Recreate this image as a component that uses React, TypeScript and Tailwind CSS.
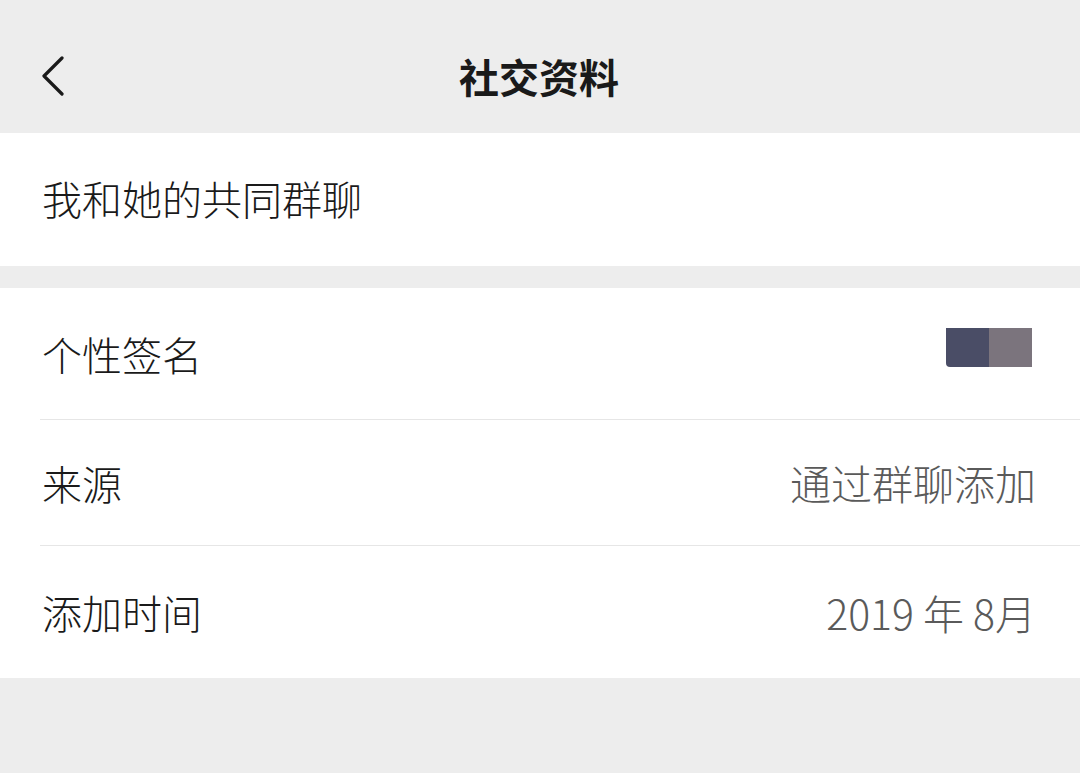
const font = { fontFamily: '"Noto Sans CJK SC", "Noto Sans", sans-serif' }

interface Row {
    label: string
    value?: string
    swatch?: boolean
}

const rows: Row[] = [
    { label: '个性签名', swatch: true },
    { label: '来源', value: '通过群聊添加' },
    { label: '添加时间', value: '2019 年 8月' },
]

export default function App() {
    return (
        <div className="w-[1080px] h-[773px] bg-[#ededed] overflow-hidden" style={font}>
            <header className="h-[133px] relative flex items-center justify-center">
                <svg className="absolute left-[40px] top-[56px]" width="26" height="40" viewBox="0 0 26 40">
                    <path d="M22 2 L4 20 L22 38" fill="none" stroke="#1a1a1a" strokeWidth="3.2" strokeLinecap="round" strokeLinejoin="round" />
                </svg>
                <h1 className="text-[40px] font-semibold text-[#1a1a1a] leading-none mt-[18px] ml-[-2px]">社交资料</h1>
            </header>

            <section className="bg-white h-[133px] flex items-center px-[42px]">
                <span className="text-[40px] leading-none text-[#1a1a1a] font-light mt-[-4px]">我和她的共同群聊</span>
            </section>

            <section className="bg-white mt-[22px] pl-[40px]">
                {rows.map((row, i) => (
                    <div
                        key={i}
                        className={
                            i === 0
                                ? 'h-[132px] flex items-center justify-between pr-[44px] border-b border-[#e6e6e6]'
                                : i === 1
                                  ? 'h-[126px] flex items-center justify-between pr-[44px] border-b border-[#e6e6e6]'
                                  : 'h-[132px] flex items-center justify-between pr-[44px]'
                        }
                    >
                        <span className="text-[40px] leading-none text-[#1a1a1a] font-light ml-[2px]">{row.label}</span>
                        {row.swatch ? (
                            <div className="flex w-[86px] h-[39px] mt-[-12px] mr-[4px]">
                                <div className="w-[43px] h-full bg-[#4a4d66] rounded-bl-[4px]" />
                                <div className="w-[43px] h-full bg-[#7b747d]" />
                            </div>
                        ) : (
                            <span className="text-[41px] leading-none text-[#5a5a5a] font-light">{row.value}</span>
                        )}
                    </div>
                ))}
            </section>
        </div>
    )
}
